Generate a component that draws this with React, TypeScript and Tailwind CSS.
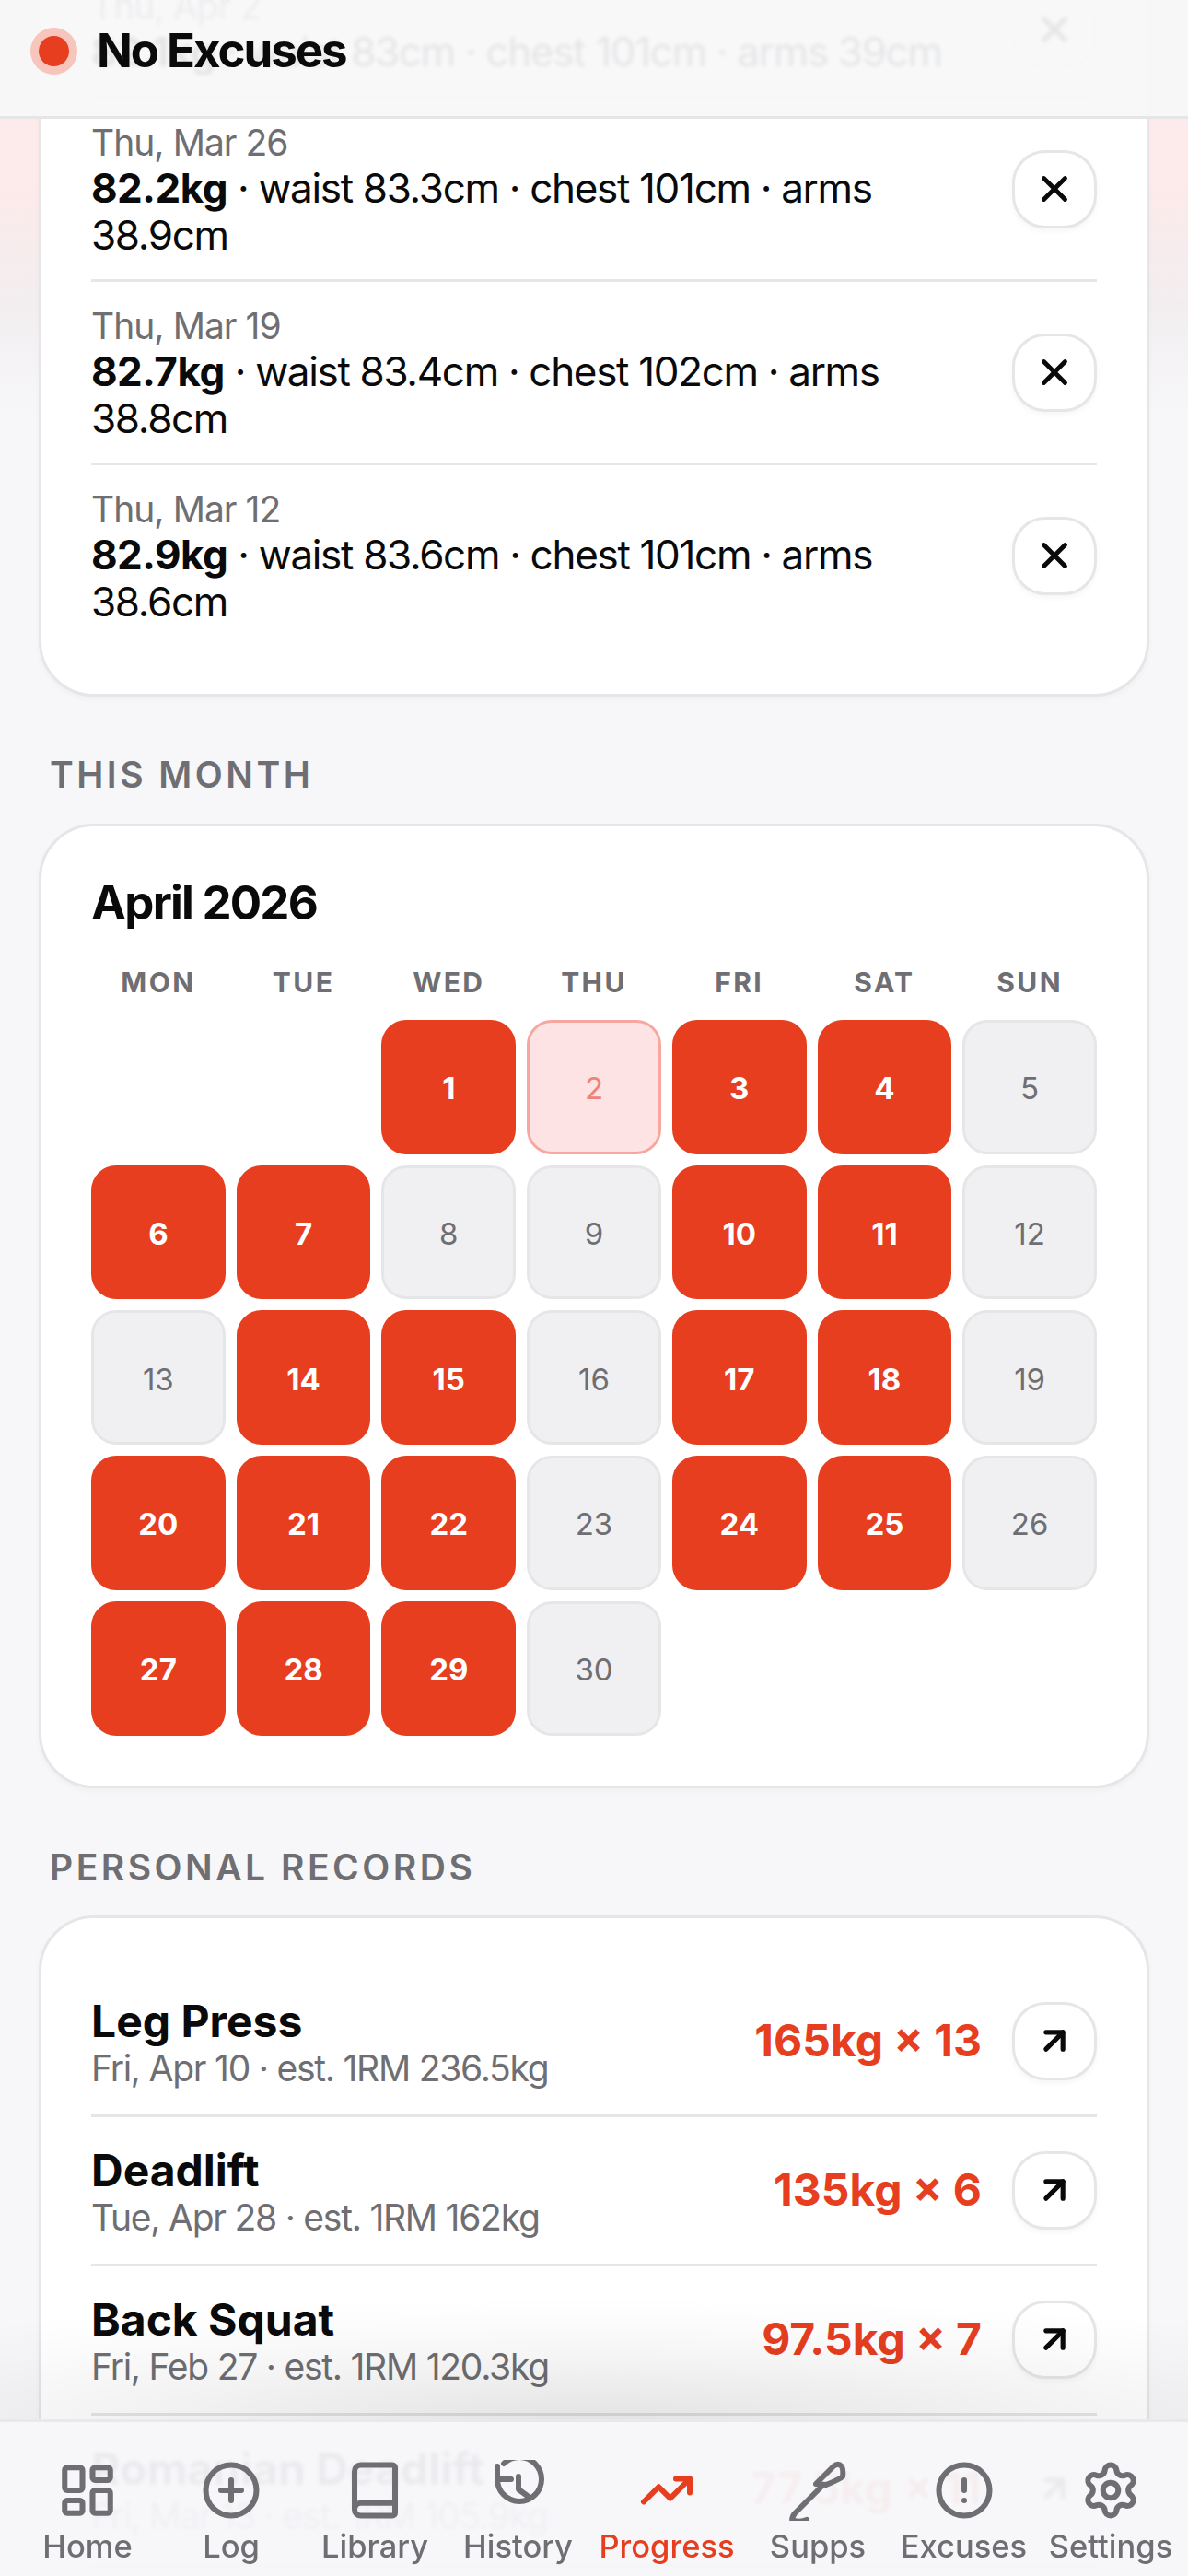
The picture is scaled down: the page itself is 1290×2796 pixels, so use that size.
import React from "react";
import { X, ArrowUpRight, LayoutDashboard, CirclePlus, Book, TrendingUp, CircleAlert, Settings } from "lucide-react";

const logs = [
  { d: "Thu, Apr 2", w: "82.1kg", r: " · waist 83cm · chest 101cm · arms 39cm" },
  { d: "Thu, Mar 26", w: "82.2kg", r: " · waist 83.3cm · chest 101cm · arms 38.9cm" },
  { d: "Thu, Mar 19", w: "82.7kg", r: " · waist 83.4cm · chest 102cm · arms 38.8cm" },
  { d: "Thu, Mar 12", w: "82.9kg", r: " · waist 83.6cm · chest 101cm · arms 38.6cm" },
];

const prs = [
  { n: "Leg Press", s: "Fri, Apr 10 · est. 1RM 236.5kg", v: "165kg × 13" },
  { n: "Deadlift", s: "Tue, Apr 28 · est. 1RM 162kg", v: "135kg × 6" },
  { n: "Back Squat", s: "Fri, Feb 27 · est. 1RM 120.3kg", v: "97.5kg × 7" },
  { n: "Romanian Deadlift", s: "Fri, Mar 13 · est. 1RM 105.9kg", v: "77.5kg × 11" },
];

const days = ["MON", "TUE", "WED", "THU", "FRI", "SAT", "SUN"];
const active = [1, 3, 4, 6, 7, 10, 11, 14, 15, 17, 18, 20, 21, 22, 24, 25, 27, 28, 29];

function Cell({ day }: { day: number }) {
  if (day === 2) {
    return (
      <div className="aspect-square flex items-center justify-center rounded-[27px] border-[3px] border-[#f8a6a0] bg-[#fde3e3] pt-[4px] text-[33px] text-[#ef8376]">
        {day}
      </div>
    );
  }
  if (active.includes(day)) {
    return (
      <div className="aspect-square flex items-center justify-center rounded-[27px] bg-[#e63e1f] pt-[4px] text-[33px] font-bold text-white">
        {day}
      </div>
    );
  }
  return (
    <div className="aspect-square flex items-center justify-center rounded-[27px] border-[3px] border-[#e6e6e8] bg-[#f0f0f2] pt-[4px] text-[33px] text-[#6e6e73]">
      {day}
    </div>
  );
}

function IconButton({ children }: { children: React.ReactNode }) {
  return (
    <div className="flex h-[85px] w-[92px] shrink-0 items-center justify-center rounded-[36px] border-[3px] border-[#e6e6e8] bg-white shadow-[0_3px_6px_rgba(0,0,0,0.04)]">
      {children}
    </div>
  );
}

function HistoryIcon() {
  return (
    <svg width="66" height="60" viewBox="0 0 66 60" fill="none" stroke="#6e6e73" strokeWidth="6" strokeLinecap="round" strokeLinejoin="round">
      <path d="M10 21 A24 24 0 1 0 34 -3 A24 24 0 0 0 17 4" />
      <path d="M10 7 V21 H25" />
      <path d="M33 18 V32 L44 40" />
    </svg>
  );
}

function SuppsIcon() {
  return (
    <svg width="72" height="66" viewBox="0 0 72 66" fill="none" stroke="#6e6e73" strokeWidth="6" strokeLinecap="round" strokeLinejoin="round">
      <path d="M34 26 L53 7 Q58 3 62 7 Q64 11 63 18 Q60 21 45 27 Z" />
      <path d="M40 29 L11 58 Q6 64 10 72 M10 66 Q18 68 24 65" />
    </svg>
  );
}

const navCls = "flex flex-col items-center";

export default function App() {
  return (
    <div className="relative h-[2796px] w-[1290px] overflow-hidden bg-[#f7f7fa] bg-[linear-gradient(180deg,#fdeaea_0px,#fdeaea_200px,#f2eef0_330px,#f7f7fa_450px)] font-['Inter',sans-serif] text-[#0a0a0b]">
      <main className="mt-[-98px] px-[42px]">
        <section className="rounded-[60px] border-[3px] border-[#e6e6e8] bg-white px-[54px] pb-[52px] pt-[54px] shadow-[0_3px_6px_rgba(0,0,0,0.03)]">
          {logs.map((l, i) => (
            <div key={l.d} className={`flex items-center justify-between gap-[36px] ${i < logs.length - 1 ? "border-b-[3px] border-[#e6e6e8]" : ""}`}>
              <div className="pb-[22px] pt-[24px]">
                <div className="text-[39px] leading-[48px] tracking-[-0.025em] text-[#6e6e73]">{l.d}</div>
                <div className="text-[44px] leading-[51px] tracking-[-0.03em]">
                  <b className="font-bold tracking-[-0.012em]">{l.w}</b>
                  {l.r}
                </div>
              </div>
              <IconButton>
                <X size={46} strokeWidth={2.5} color="#0a0a0b" />
              </IconButton>
            </div>
          ))}
        </section>

        <h2 className="mb-[29px] mt-[61px] pl-[12px] text-[39px] font-semibold leading-[48px] tracking-[0.09em] text-[#6e6e73]">THIS MONTH</h2>

        <section className="rounded-[60px] border-[3px] border-[#e6e6e8] bg-white p-[54px] shadow-[0_3px_6px_rgba(0,0,0,0.03)]">
          <div className="mb-[39px] text-[51px] font-bold leading-[58px] tracking-[-0.035em]">April 2026</div>
          <div className="mb-[23px] grid grid-cols-7 gap-[12px]">
            {days.map((d) => (
              <div key={d} className="text-center text-[30px] font-bold leading-[36px] tracking-[0.08em] text-[#6e6e73]">
                {d}
              </div>
            ))}
          </div>
          <div className="grid grid-cols-7 gap-[12px]">
            <div />
            <div />
            {Array.from({ length: 30 }, (_, i) => (
              <Cell key={i} day={i + 1} />
            ))}
          </div>
        </section>

        <h2 className="mb-[28px] mt-[62px] pl-[12px] text-[39px] font-semibold leading-[48px] tracking-[0.09em] text-[#6e6e73]">PERSONAL RECORDS</h2>

        <section className="rounded-[60px] border-[3px] border-[#e6e6e8] bg-white px-[54px] pt-[54px] shadow-[0_3px_6px_rgba(0,0,0,0.03)]">
          {prs.map((p) => (
            <div key={p.n} className="flex h-[162px] items-center justify-between border-b-[3px] border-[#e6e6e8]">
              <div className="pt-[6px]">
                <div className="text-[48px] font-bold leading-[54px]">{p.n}</div>
                <div className="text-[39px] leading-[48px] tracking-[-0.032em] text-[#6e6e73]">{p.s}</div>
              </div>
              <div className="flex items-center gap-[33px]">
                <div className="text-[48px] font-bold text-[#e63e1f]">{p.v}</div>
                <IconButton>
                  <ArrowUpRight size={44} strokeWidth={2.8} color="#0a0a0b" />
                </IconButton>
              </div>
            </div>
          ))}
        </section>
      </main>

      <header className="absolute inset-x-0 top-0 flex h-[129px] items-center gap-[30px] border-b-[3px] border-[#e6e6e8] bg-[#f7f7f9]/92 pb-[16px] pl-[42px] backdrop-blur-[2px]">
        <div className="h-[33px] w-[33px] rounded-full bg-[#e63e1f] shadow-[0_0_0_9px_#f8c5bc]" />
        <div className="text-[51px] font-bold leading-[60px] tracking-[-0.04em]">No Excuses</div>
      </header>

      <div className="absolute inset-x-0 bottom-[167px] h-[136px] bg-[radial-gradient(ellipse_85%_100%_at_50%_100%,rgba(0,0,0,0.11),rgba(0,0,0,0.07)_30%,rgba(0,0,0,0.04)_54%,rgba(0,0,0,0.015)_77%,transparent)]" />

      <nav className="absolute inset-x-0 bottom-0 flex h-[170px] border-t-[3px] border-[#e9e9eb] bg-[#f7f7fa]/95 pl-[17px] pt-[41px] text-[34.5px] font-medium leading-[36px] text-[#6e6e73] backdrop-blur-[2px]">
        <div className={`${navCls} w-[156px]`}>
          <div className="flex h-[66px] items-center justify-center"><LayoutDashboard size={66} strokeWidth={2.2} /></div>
          <div className="mt-[10px]">Home</div>
        </div>
        <div className={`${navCls} w-[156px]`}>
          <div className="flex h-[66px] items-center justify-center"><CirclePlus size={66} strokeWidth={2.2} /></div>
          <div className="mt-[10px]">Log</div>
        </div>
        <div className={`${navCls} w-[156px]`}>
          <div className="flex h-[66px] items-center justify-center"><Book size={66} strokeWidth={2.2} /></div>
          <div className="mt-[10px]">Library</div>
        </div>
        <div className={`${navCls} w-[155px]`}>
          <div className="h-[66px]"><HistoryIcon /></div>
          <div className="mt-[10px]">History</div>
        </div>
        <div className={`${navCls} w-[168px] text-[#e63e1f]`}>
          <div className="flex h-[66px] items-center justify-center"><TrendingUp size={60} strokeWidth={2.4} /></div>
          <div className="mt-[10px]">Progress</div>
        </div>
        <div className={`${navCls} w-[160px]`}>
          <div className="h-[66px]"><SuppsIcon /></div>
          <div className="mt-[10px]">Supps</div>
        </div>
        <div className={`${navCls} w-[157px]`}>
          <div className="flex h-[66px] items-center justify-center"><CircleAlert size={66} strokeWidth={2.2} /></div>
          <div className="mt-[10px]">Excuses</div>
        </div>
        <div className={`${navCls} w-[162px]`}>
          <div className="flex h-[66px] items-center justify-center"><Settings size={66} strokeWidth={2.2} /></div>
          <div className="mt-[10px]">Settings</div>
        </div>
      </nav>
    </div>
  );
}
